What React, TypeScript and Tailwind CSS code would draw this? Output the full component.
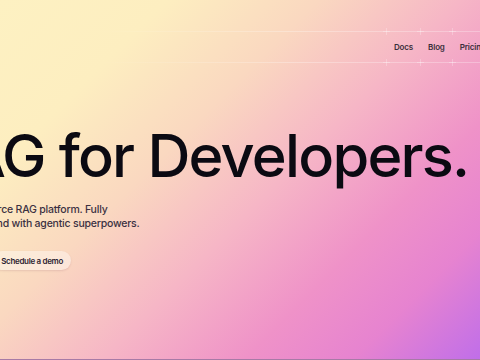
import React from "react";

function Cross({ className }: { className: string }) {
  return (
    <span className={`pointer-events-none absolute w-[7px] h-[7px] ${className}`}>
      <span className="absolute left-[3px] top-0 w-px h-[7px] bg-white/25" />
      <span className="absolute top-[3px] left-0 h-px w-[7px] bg-white/25" />
    </span>
  );
}

function NavItem({ label }: { label: string }) {
  return (
    <div className="relative h-[30px] pl-[8px] pr-[7px] flex items-center shrink-0">
      <Cross className="-left-[3px] -top-[4px]" />
      <Cross className="-left-[3px] -bottom-[4px]" />
      <span className="text-[8px] font-semibold tracking-[-0.02em] text-[#3a2f3b]">{label}</span>
    </div>
  );
}

export default function App() {
  return (
    <div
      className="relative w-[480px] h-[360px] overflow-hidden border-b border-[#a77aa6] bg-[linear-gradient(135deg,#fdf1c2_0%,#fdeec0_20%,#fad8c0_38%,#f6b6c6_55%,#ef92c8_72%,#e683d0_85%,#c06ee9_100%)]"
      style={{ fontFamily: "Inter, 'Noto Sans', sans-serif" }}
    >
      {/* header */}
      <div className="pt-[31px]">
        <div className="h-px w-full bg-[linear-gradient(90deg,transparent_20%,rgba(255,255,255,0.28)_60%)]" />
        <div className="flex pl-[386px] whitespace-nowrap">
          <NavItem label="Docs" />
          <NavItem label="Blog" />
          <NavItem label="Pricing" />
          <NavItem label="GitHub" />
        </div>
        <div className="h-px w-full bg-[linear-gradient(90deg,transparent_20%,rgba(255,255,255,0.28)_60%)]" />
      </div>

      {/* hero */}
      <div className="-ml-[51px] mt-[62px] whitespace-nowrap">
        <h1 className="-ml-[22px] text-[59.5px] leading-[61px] font-medium tracking-[-0.03em] text-[#0b0a12]">
          RAG for Developers.
        </h1>
        <p className="mt-[17px] -ml-[6px] indent-[6px] text-[10.5px] leading-[14px] font-medium tracking-[-0.02em] text-[#3b3142]">
          Open-source RAG platform. Fully
          <br />
          managed and with agentic superpowers.
        </p>
        <div className="mt-[20px] ml-[3px] flex gap-2">
          <button className="h-[19px] px-[8px] rounded-full bg-[#171321] text-white text-[8px] font-semibold tracking-[-0.04em]">
            Start
          </button>
          <button className="h-[19px] px-[8px] rounded-full bg-white/40 shadow-[0_1px_2px_rgba(120,60,90,0.15)] text-[8px] font-semibold tracking-[-0.04em] text-[#2d2431]">
            Schedule a demo
          </button>
        </div>
      </div>
    </div>
  );
}
